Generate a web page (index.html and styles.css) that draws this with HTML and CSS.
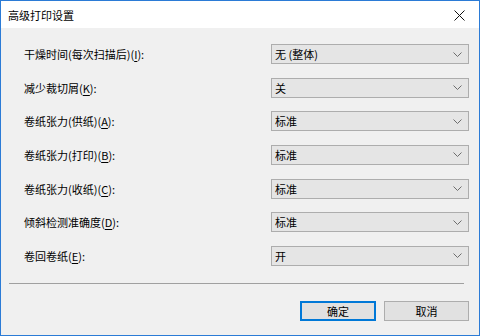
FILE: index.html
```html
<!DOCTYPE html>
<html lang="zh-CN">
<head>
    <meta charset="UTF-8">
    <title>高级打印设置</title>
    <link rel="stylesheet" href="styles.css">
</head>
<body>

    <!-- Dialog window -->
    <div class="dialog">

        <!-- Title bar -->
        <div class="titlebar">
            <span class="title">高级打印设置</span>
            <span class="close">
                <svg width="11" height="11" viewBox="0 0 11 11"><path d="M0.5 0.5 L10.5 10.5 M10.5 0.5 L0.5 10.5" stroke="#111" stroke-width="1" fill="none"/></svg>
            </span>
        </div>

        <!-- Settings -->
        <div class="settings">
            <label>干燥时间(每次扫描后)(<u>I</u>):</label>
            <div class="select"><span>无 (整体)</span><svg class="chev" width="9" height="5" viewBox="0 0 9 5"><path d="M0.5 0.5 L4.5 4.5 L8.5 0.5" stroke="#6d6d6d" fill="none"/></svg></div>

            <label>减少裁切屑(<u>K</u>):</label>
            <div class="select"><span>关</span><svg class="chev" width="9" height="5" viewBox="0 0 9 5"><path d="M0.5 0.5 L4.5 4.5 L8.5 0.5" stroke="#6d6d6d" fill="none"/></svg></div>

            <label>卷纸张力(供纸)(<u>A</u>):</label>
            <div class="select"><span>标准</span><svg class="chev" width="9" height="5" viewBox="0 0 9 5"><path d="M0.5 0.5 L4.5 4.5 L8.5 0.5" stroke="#6d6d6d" fill="none"/></svg></div>

            <label>卷纸张力(打印)(<u>B</u>):</label>
            <div class="select"><span>标准</span><svg class="chev" width="9" height="5" viewBox="0 0 9 5"><path d="M0.5 0.5 L4.5 4.5 L8.5 0.5" stroke="#6d6d6d" fill="none"/></svg></div>

            <label>卷纸张力(收纸)(<u>C</u>):</label>
            <div class="select"><span>标准</span><svg class="chev" width="9" height="5" viewBox="0 0 9 5"><path d="M0.5 0.5 L4.5 4.5 L8.5 0.5" stroke="#6d6d6d" fill="none"/></svg></div>

            <label>倾斜检测准确度(<u>D</u>):</label>
            <div class="select"><span>标准</span><svg class="chev" width="9" height="5" viewBox="0 0 9 5"><path d="M0.5 0.5 L4.5 4.5 L8.5 0.5" stroke="#6d6d6d" fill="none"/></svg></div>

            <label>卷回卷纸(<u>E</u>):</label>
            <div class="select"><span>开</span><svg class="chev" width="9" height="5" viewBox="0 0 9 5"><path d="M0.5 0.5 L4.5 4.5 L8.5 0.5" stroke="#6d6d6d" fill="none"/></svg></div>
        </div>

        <hr class="separator">

        <!-- Buttons -->
        <div class="buttons">
            <button class="btn btn-ok">确定</button>
            <button class="btn btn-cancel">取消</button>
        </div>
    </div>

</body>
</html>
```

FILE: styles.css
```css
body {
    margin: 0;
    padding: 0;
    font-family: "Noto Sans CJK SC", "Noto Sans", sans-serif;
    font-size: 11px;
    color: #000;
}

.dialog {
    width: 480px;
    height: 336px;
    box-sizing: border-box;
    border: 1px solid #2b7bd6;
    background-color: #f0f0f0;
}

.titlebar {
    height: 27px;
    background-color: #fff;
    display: flex;
    align-items: center;
    justify-content: space-between;
    padding: 0 14px 0 7px;
}

.title {
    font-size: 11px;
    color: #000;
}

.close {
    display: flex;
    align-items: center;
    margin-top: 1px;
}

.settings {
    display: grid;
    grid-template-columns: 1fr 198px;
    grid-auto-rows: 20px;
    row-gap: 13.67px;
    padding: 16px 10px 0 23px;
}

.settings label {
    display: flex;
    align-items: center;
    color: #000;
}

.settings u {
    text-decoration: underline;
    text-underline-offset: 2px;
}

.select {
    box-sizing: border-box;
    border: 1px solid #adadad;
    background-color: #e5e5e5;
    display: flex;
    align-items: center;
    justify-content: space-between;
    padding: 0 6px 0 3px;
}

.chev {
    display: block;
}

.separator {
    border: none;
    border-top: 1px solid #a0a0a0;
    margin: 17px 15px 0 8px;
    height: 0;
}

.buttons {
    display: flex;
    justify-content: flex-end;
    gap: 8px;
    padding: 17px 10px 0 0;
}

.btn {
    box-sizing: border-box;
    height: 20px;
    font-family: "Noto Sans CJK SC", "Noto Sans", sans-serif;
    font-size: 11px;
    background-color: #e1e1e1;
    border: 1px solid #adadad;
    padding: 0;
    color: #000;
}

.btn-ok {
    width: 76px;
    border: 2px solid #0078d7;
}

.btn-cancel {
    width: 85px;
}
```
